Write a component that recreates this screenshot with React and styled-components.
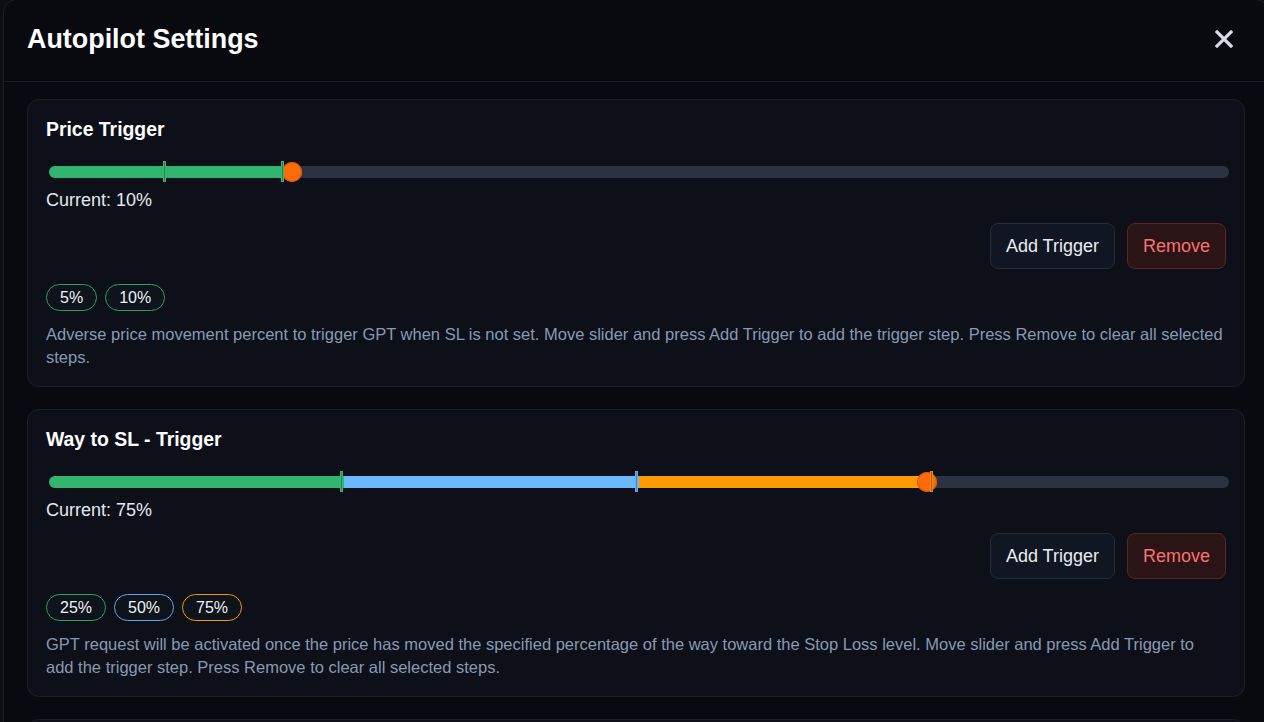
import React from 'react';
import styled, { createGlobalStyle } from 'styled-components';

const Global = createGlobalStyle`
  html, body { margin: 0; padding: 0; background: #0d0e12; overflow: hidden; }
  body { font-family: "Liberation Sans", Arial, sans-serif; }
  * { box-sizing: border-box; }
`;

const COLORS = {
  green: { fill: '#30b46e', tick: '#1f8a50', tickEdge: '#52d18c', border: '#27a061' },
  blue: { fill: '#6cb8ff', tick: '#3f86cf', tickEdge: '#8ccaff', border: '#5ea6ec' },
  orange: { fill: '#ff9a05', tick: '#b85a00', tickEdge: '#ffb040', border: '#f0980a' },
};

const Modal = styled.div`
  margin: -1px 0 0 3px;
  width: 1266px;
  height: calc(100vh + 1px);
  background: #080a0f;
  border: 1px solid #1b1f27;
  border-bottom-width: 0;
  border-radius: 14px 14px 0 0;
  overflow: hidden;
`;

const Header = styled.header`
  height: 82px;
  display: flex;
  align-items: center;
  justify-content: space-between;
  padding: 0 22px 2px 23px;
  border-bottom: 1px solid #1a1d24;
`;

const Title = styled.h1`
  margin: 0;
  font-size: 26.9px;
  font-weight: 700;
  color: #ffffff;
`;

const CloseButton = styled.button`
  width: 44px;
  height: 44px;
  display: flex;
  align-items: center;
  justify-content: center;
  background: transparent;
  border: none;
  padding: 0;
  margin-top: -2px;
  cursor: pointer;
`;

const Body = styled.div`
  padding: 17px 23px 0 23px;
  display: flex;
  flex-direction: column;
  gap: 22px;
`;

const Card = styled.section`
  background: #0d1018;
  border: 1px solid #1d212b;
  border-radius: 12px;
  padding: 18px 18px 17px 18px;
  display: flex;
  flex-direction: column;
`;

const CardTitle = styled.h2`
  margin: 0;
  font-size: 19.4px;
  line-height: 22px;
  font-weight: 700;
  color: #ffffff;
`;

const SliderWrap = styled.div`
  position: relative;
  height: 24px;
  margin: 20px -3px 0 3px;
`;

const Track = styled.div`
  position: absolute;
  left: 0;
  right: 0;
  top: 6px;
  height: 12px;
  border-radius: 6px;
  background: #2c3240;
`;

const Segment = styled.div`
  position: absolute;
  top: 6px;
  height: 12px;
  background: ${p => p.$color};
  border-radius: ${p => (p.$first ? '6px 0 0 6px' : '0')};
`;

const Tick = styled.div`
  position: absolute;
  top: 1px;
  width: 3px;
  height: 21px;
  border-radius: 1px;
  background: ${p => p.$color};
  box-shadow: inset 0 0 0 0.6px ${p => p.$edge};
  z-index: 2;
`;

const Thumb = styled.div`
  position: absolute;
  top: 2px;
  width: 20px;
  height: 20px;
  border-radius: 50%;
  background: #ff6a0a;
  box-shadow: inset 0 0 0 1px #d95800;
  z-index: 1;
`;

const Current = styled.div`
  margin-top: 5px;
  font-size: 18px;
  line-height: 22px;
  color: #e2e8f0;
`;

const ButtonRow = styled.div`
  margin-top: 12px;
  display: flex;
  justify-content: flex-end;
  gap: 12px;
`;

const Button = styled.button`
  height: 46px;
  padding: 0 15px;
  border-radius: 8px;
  font-family: "Liberation Sans", Arial, sans-serif;
  font-size: 18px;
  cursor: pointer;
  background: ${p => (p.$danger ? '#2a1416' : '#111722')};
  border: 1px solid ${p => (p.$danger ? '#5a2626' : '#252c39')};
  color: ${p => (p.$danger ? '#f87171' : '#e8ecf2')};
`;

const Chips = styled.div`
  margin-top: 15px;
  display: flex;
  gap: 8px;
`;

const Chip = styled.span`
  height: 27px;
  padding: 0 13px;
  display: inline-flex;
  align-items: center;
  border-radius: 14px;
  border: 1px solid ${p => p.$color};
  background: #0f131b;
  color: #eef2f7;
  font-size: 16px;
`;

const Desc = styled.p`
  margin: 12px 0 0 0;
  font-size: 16.5px;
  line-height: 23px;
  color: #8a99b2;
`;

const cards = [
  {
    title: 'Price Trigger',
    max: 50,
    value: 10,
    steps: [
      { v: 5, c: 'green' },
      { v: 10, c: 'green' },
    ],
    desc: 'Adverse price movement percent to trigger GPT when SL is not set. Move slider and press Add Trigger to add the trigger step. Press Remove to clear all selected steps.',
  },
  {
    title: 'Way to SL - Trigger',
    max: 100,
    value: 75,
    steps: [
      { v: 25, c: 'green' },
      { v: 50, c: 'blue' },
      { v: 75, c: 'orange' },
    ],
    desc: 'GPT request will be activated once the price has moved the specified percentage of the way toward the Stop Loss level. Move slider and press Add Trigger to add the trigger step. Press Remove to clear all selected steps.',
  },
  {
    title: 'Time Trigger',
    max: 60,
    value: 15,
    steps: [{ v: 15, c: 'green' }],
    desc: 'Minutes after entry to trigger GPT. Move slider and press Add Trigger to add the trigger step.',
  },
];

function Slider({ max, value, steps }) {
  let prev = 0;
  const segs = [];
  steps.forEach((s, i) => {
    if (s.v > prev && s.v <= value) {
      segs.push({ from: prev, to: s.v, color: COLORS[s.c].fill, first: i === 0 });
      prev = s.v;
    }
  });
  if (value > prev) segs.push({ from: prev, to: value, color: COLORS.green.fill, first: segs.length === 0 });
  return (
    <SliderWrap>
      <Track />
      {segs.map((s, i) => (
        <Segment
          key={i}
          $color={s.color}
          $first={s.first}
          style={{ left: `${(s.from / max) * 100}%`, width: `${((s.to - s.from) / max) * 100}%` }}
        />
      ))}
      <Thumb style={{ left: `calc(${value / max} * (100% - 26px) + 2px)` }} />
      {steps.map((s, i) => (
        <Tick
          key={i}
          $color={COLORS[s.c].tick}
          $edge={COLORS[s.c].tickEdge}
          style={{ left: `calc(${(s.v / max) * 100}% - 4.5px)` }}
        />
      ))}
    </SliderWrap>
  );
}

export default function App() {
  return (
    <>
      <Global />
      <Modal>
        <Header>
          <Title>Autopilot Settings</Title>
          <CloseButton aria-label="Close">
            <svg width="18" height="18" viewBox="0 0 18 18">
              <path d="M2 2 L16 16 M16 2 L2 16" stroke="#d6dae1" strokeWidth="3.2" strokeLinecap="square" />
            </svg>
          </CloseButton>
        </Header>
        <Body>
          {cards.map(card => (
            <Card key={card.title}>
              <CardTitle>{card.title}</CardTitle>
              <Slider max={card.max} value={card.value} steps={card.steps} />
              <Current>Current: {card.value}%</Current>
              <ButtonRow>
                <Button>Add Trigger</Button>
                <Button $danger>Remove</Button>
              </ButtonRow>
              <Chips>
                {card.steps.map(s => (
                  <Chip key={s.v} $color={COLORS[s.c].border}>{s.v}%</Chip>
                ))}
              </Chips>
              <Desc>{card.desc}</Desc>
            </Card>
          ))}
        </Body>
      </Modal>
    </>
  );
}
